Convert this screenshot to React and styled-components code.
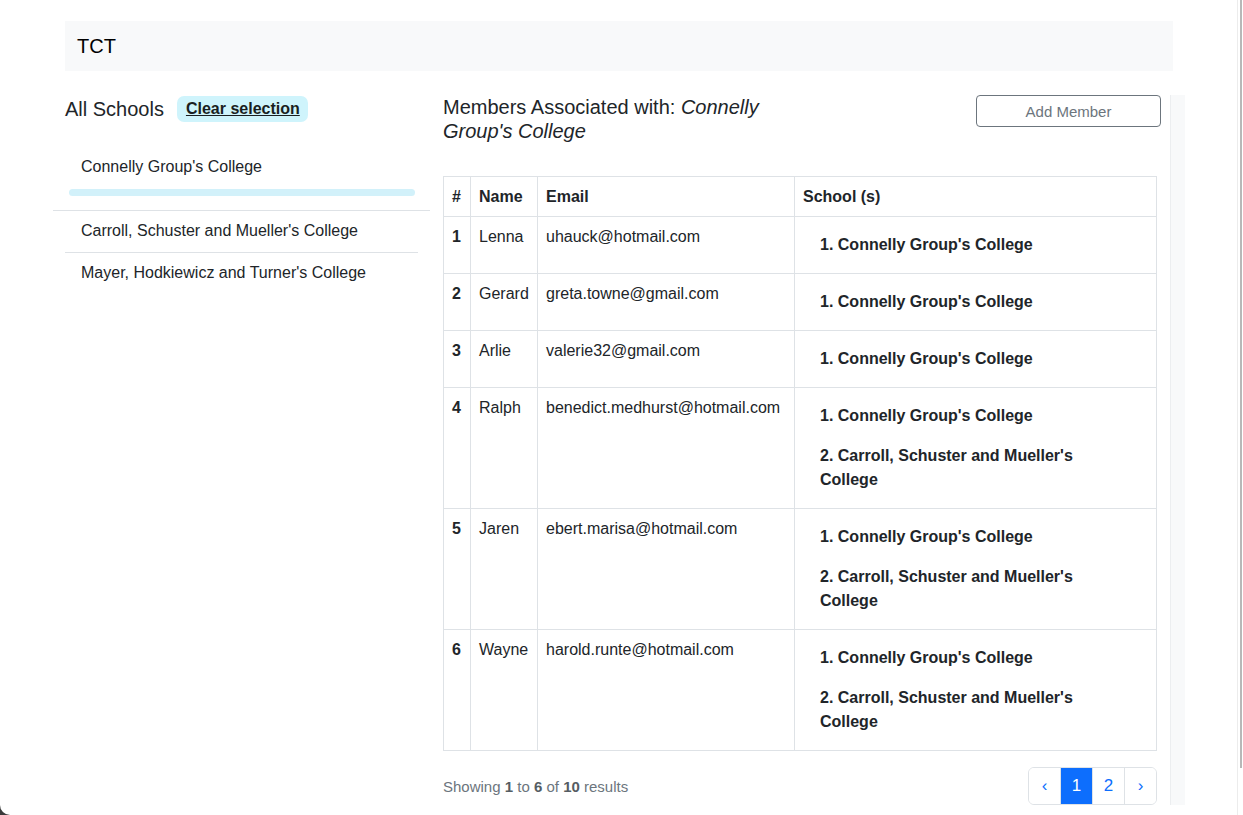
import React from 'react';
import styled, { createGlobalStyle } from 'styled-components';

const GlobalStyle = createGlobalStyle`
    html, body {
        margin: 0;
        padding: 0;
        background: #3a3a3a;
    }
    body {
        font-family: "Liberation Sans", Arial, sans-serif;
        color: #212529;
        font-size: 16px;
    }
`

const schools = [
    "Connelly Group's College",
    "Carroll, Schuster and Mueller's College",
    "Mayer, Hodkiewicz and Turner's College",
];

const members = [
    { id: 1, name: 'Lenna', email: 'uhauck@hotmail.com', schools: [0] },
    { id: 2, name: 'Gerard', email: 'greta.towne@gmail.com', schools: [0] },
    { id: 3, name: 'Arlie', email: 'valerie32@gmail.com', schools: [0] },
    { id: 4, name: 'Ralph', email: 'benedict.medhurst@hotmail.com', schools: [0, 1] },
    { id: 5, name: 'Jaren', email: 'ebert.marisa@hotmail.com', schools: [0, 1] },
    { id: 6, name: 'Wayne', email: 'harold.runte@hotmail.com', schools: [0, 1] },
];

const App = () => {
    return (
        <Frame>
            <GlobalStyle />
            <Page>
                <Navbar>TCT</Navbar>
                <Main>
                    <Sidebar>
                        <SideHeader>
                            <Title>All Schools</Title>
                            <ClearBadge>Clear selection</ClearBadge>
                        </SideHeader>
                        <SchoolList>
                            {schools.map((s, i) => (
                                <SchoolItem key={s} $active={i === 0}>
                                    {s}
                                    {i === 0 && <ActiveBar />}
                                </SchoolItem>
                            ))}
                        </SchoolList>
                    </Sidebar>
                    <Content>
                        <ContentHeader>
                            <Title $wrap>
                                Members Associated with: <em>Connelly Group's College</em>
                            </Title>
                            <OutlineButton>Add Member</OutlineButton>
                        </ContentHeader>
                        <Table>
                            <colgroup>
                                <col style={{ width: 27 }} />
                                <col style={{ width: 67 }} />
                                <col style={{ width: 257 }} />
                                <col />
                            </colgroup>
                            <thead>
                                <tr>
                                    <Th>#</Th>
                                    <Th>Name</Th>
                                    <Th>Email</Th>
                                    <Th>School (s)</Th>
                                </tr>
                            </thead>
                            <tbody>
                                {members.map(m => (
                                    <tr key={m.id}>
                                        <Td $bold>{m.id}</Td>
                                        <Td>{m.name}</Td>
                                        <Td>{m.email}</Td>
                                        <Td>
                                            <SchoolStack>
                                                {m.schools.map((s, i) => (
                                                    <SchoolEntry key={s}>{i + 1}. {schools[s]}</SchoolEntry>
                                                ))}
                                            </SchoolStack>
                                        </Td>
                                    </tr>
                                ))}
                            </tbody>
                        </Table>
                        <Footer>
                            <Summary>
                                Showing <b>1</b> to <b>6</b> of <b>10</b> results
                            </Summary>
                            <Pager>
                                <PageBtn>‹</PageBtn>
                                <PageBtn $active>1</PageBtn>
                                <PageBtn>2</PageBtn>
                                <PageBtn>›</PageBtn>
                            </Pager>
                        </Footer>
                    </Content>
                    <SideStrip />
                </Main>
            </Page>
            <ScrollTrack>
                <ScrollThumb />
            </ScrollTrack>
        </Frame>
    );
}

export default App;

const Frame = styled.div`
    width: 1243px;
    height: 815px;
    display: flex;
    background: #fff;
    border-bottom-left-radius: 10px;
    overflow: hidden;
`

const Page = styled.div`
    flex: 1;
    padding: 21px 0 0 65px;
`

const Navbar = styled.div`
    width: 1108px;
    height: 50px;
    box-sizing: border-box;
    background: #f8f9fa;
    display: flex;
    align-items: center;
    padding-left: 12px;
    font-size: 20px;
    color: #000;
`

const Main = styled.div`
    display: flex;
    margin-top: 24px;
`

const Sidebar = styled.div`
    width: 353px;
    margin-right: 25px;
`

const SideHeader = styled.div`
    display: flex;
    align-items: center;
    gap: 13px;
    height: 27px;
`

const Title = styled.h5`
    margin: 0;
    font-size: 20px;
    font-weight: 400;
    line-height: 24px;
    max-width: ${p => (p.$wrap ? '330px' : 'none')};

    em {
        font-style: italic;
    }
`

const ClearBadge = styled.span`
    background: #cff4fc;
    border-radius: 7px;
    padding: 3px 8px 3px 9px;
    font-weight: 700;
    font-size: 16px;
    text-decoration: underline;
    line-height: 20px;
    color: #1a1e21;
`

const SchoolList = styled.div`
    margin-top: 33px;
`

const SchoolItem = styled.div`
    padding: ${p => (p.$active ? '0 12px 14px 28px' : '8px 0 9px 16px')};
    margin: ${p => (p.$active ? '0 -12px' : '0')};
    line-height: 24px;
    border-bottom: 1px solid #dee2e6;

    &:last-child {
        border-bottom: none;
    }
`

const ActiveBar = styled.div`
    height: 7px;
    border-radius: 4px;
    background: #d2f1fa;
    margin: 10px 3px 0 -12px;
`

const Content = styled.div`
    width: 718px;
`

const ContentHeader = styled.div`
    display: flex;
    justify-content: space-between;
    align-items: flex-start;
    height: 81px;
`

const OutlineButton = styled.button`
    width: 185px;
    height: 32px;
    background: #fff;
    border: 1px solid #6c757d;
    border-radius: 4px;
    color: #6c757d;
    font-family: inherit;
    font-size: 15px;
`

const Table = styled.table`
    width: 714px;
    border-collapse: collapse;
    table-layout: fixed;
    border: 1px solid #dee2e6;
`

const Th = styled.th`
    text-align: left;
    padding: 8px;
    height: 23px;
    font-weight: 700;
    border: 1px solid #dee2e6;
    line-height: 23px;
`

const Td = styled.td`
    vertical-align: top;
    padding: 8px;
    line-height: 24px;
    border: 1px solid #dee2e6;
    font-weight: ${p => (p.$bold ? 700 : 400)};
    white-space: nowrap;
`

const SchoolStack = styled.div`
    display: flex;
    flex-direction: column;
    gap: 16px;
    padding: 8px 45px 8px 17px;
    white-space: normal;
`

const SchoolEntry = styled.div`
    font-weight: 700;
    line-height: 24px;
`

const Footer = styled.div`
    display: flex;
    justify-content: space-between;
    align-items: center;
    width: 714px;
    margin-top: 16px;
`

const Summary = styled.span`
    color: #6c757d;
    font-size: 15px;

    b {
        font-weight: 700;
        color: #555d63;
    }
`

const Pager = styled.div`
    display: flex;
    border: 1px solid #dee2e6;
    border-radius: 6px;
    overflow: hidden;
    height: 38px;
    box-sizing: border-box;
`

const PageBtn = styled.div`
    width: 31px;
    display: flex;
    align-items: center;
    justify-content: center;
    font-size: 17px;
    color: ${p => (p.$active ? '#fff' : '#0d6efd')};
    background: ${p => (p.$active ? '#0d6efd' : '#fff')};

    & + & {
        border-left: 1px solid #dee2e6;
    }
`

const SideStrip = styled.div`
    width: 14px;
    margin-left: 9px;
    background: #f8f9fa;
    border-left: 1px solid #eceef0;
`

const ScrollTrack = styled.div`
    width: 4px;
    margin-right: 1px;
    border-left: 1px solid #ececec;
    display: flex;
    justify-content: flex-end;
`

const ScrollThumb = styled.div`
    width: 2px;
    height: 768px;
    background: #b8b8b8;
`
